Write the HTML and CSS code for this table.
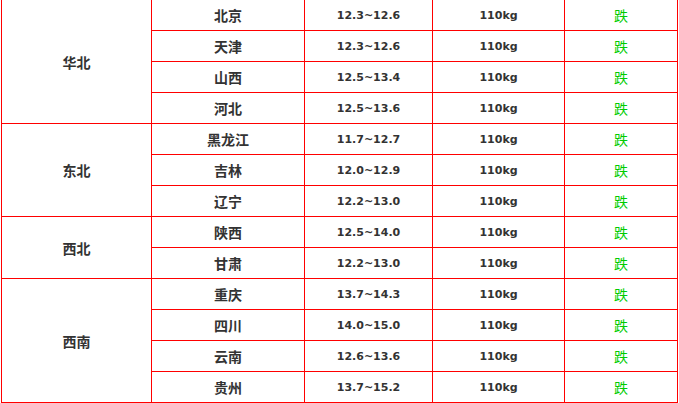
FILE: index.html
```html
<!DOCTYPE html>
<html lang="zh">
<head>
<meta charset="utf-8">
<link rel="stylesheet" href="styles.css">
</head>
<body>
<div class="wrap">
<table class="price">
<colgroup>
<col class="c-region"><col class="c-prov"><col class="c-price"><col class="c-weight"><col class="c-trend">
</colgroup>
<tbody>
<tr><td class="region" rowspan="4">华北</td><td class="prov">北京</td><td class="num">12.3~12.6</td><td class="num">110kg</td><td class="down">跌</td></tr>
<tr><td class="prov">天津</td><td class="num">12.3~12.6</td><td class="num">110kg</td><td class="down">跌</td></tr>
<tr><td class="prov">山西</td><td class="num">12.5~13.4</td><td class="num">110kg</td><td class="down">跌</td></tr>
<tr><td class="prov">河北</td><td class="num">12.5~13.6</td><td class="num">110kg</td><td class="down">跌</td></tr>
<tr><td class="region" rowspan="3">东北</td><td class="prov">黑龙江</td><td class="num">11.7~12.7</td><td class="num">110kg</td><td class="down">跌</td></tr>
<tr><td class="prov">吉林</td><td class="num">12.0~12.9</td><td class="num">110kg</td><td class="down">跌</td></tr>
<tr><td class="prov">辽宁</td><td class="num">12.2~13.0</td><td class="num">110kg</td><td class="down">跌</td></tr>
<tr><td class="region" rowspan="2">西北</td><td class="prov">陕西</td><td class="num">12.5~14.0</td><td class="num">110kg</td><td class="down">跌</td></tr>
<tr><td class="prov">甘肃</td><td class="num">12.2~13.0</td><td class="num">110kg</td><td class="down">跌</td></tr>
<tr><td class="region" rowspan="4">西南</td><td class="prov">重庆</td><td class="num">13.7~14.3</td><td class="num">110kg</td><td class="down">跌</td></tr>
<tr><td class="prov">四川</td><td class="num">14.0~15.0</td><td class="num">110kg</td><td class="down">跌</td></tr>
<tr><td class="prov">云南</td><td class="num">12.6~13.6</td><td class="num">110kg</td><td class="down">跌</td></tr>
<tr><td class="prov">贵州</td><td class="num">13.7~15.2</td><td class="num">110kg</td><td class="down">跌</td></tr>
</tbody>
</table>
</div>
</body>
</html>
```
FILE: styles.css
```css
html, body {
  margin: 0;
  padding: 0;
  background: #fff;
}
.wrap {
  padding-left: 1px;
  margin-top: -1px;
}
.price {
  border-collapse: collapse;
  table-layout: fixed;
  width: 677px;
  border: 1px solid #f00;
  font-family: "DejaVu Sans", "Noto Sans CJK SC", sans-serif;
  color: #333;
}
.c-region { width: 150px; }
.c-prov { width: 153px; }
.c-price { width: 128px; }
.c-weight { width: 132px; }
.c-trend { width: 113px; }
.price td {
  border: 1px solid #f00;
  padding: 0;
  height: 30px;
  text-align: center;
  vertical-align: middle;
}
.region, .prov {
  font-family: "Noto Sans CJK SC", sans-serif;
  font-weight: bold;
  font-size: 14px;
}
.num {
  font-weight: bold;
  font-size: 11px;
}
.down {
  font-family: "Noto Sans CJK SC", sans-serif;
  color: #00cc00;
  font-size: 14px;
}
```
